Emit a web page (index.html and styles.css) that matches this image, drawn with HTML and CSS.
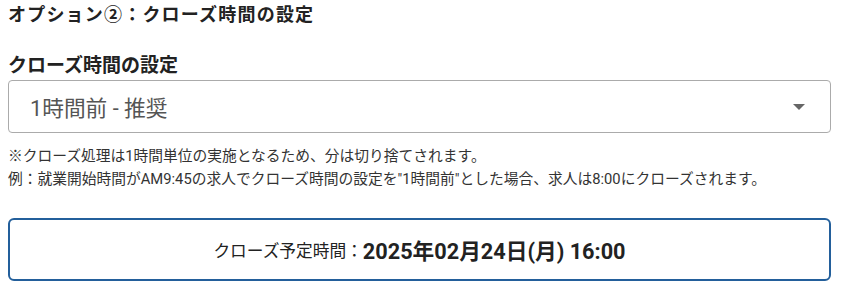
FILE: index.html
```html
<!DOCTYPE html>
<html lang="ja">
<head>
<meta charset="utf-8">
<link rel="stylesheet" href="styles.css">
</head>
<body>
<div class="page">
  <h2 class="title">オプション②：クローズ時間の設定</h2>
  <div class="field">
    <label class="label">クローズ時間の設定</label>
    <div class="select">
      <span class="select-value">1時間前 - 推奨</span>
      <svg class="caret" width="14" height="8" viewBox="0 0 14 8"><path d="M1 1 L13 1 L7 7 Z" fill="#666"/></svg>
    </div>
  </div>
  <div class="notes">
    <p>※クローズ処理は1時間単位の実施となるため、分は切り捨てされます。</p>
    <p>例：就業開始時間がAM9:45の求人でクローズ時間の設定を"1時間前"とした場合、求人は8:00にクローズされます。</p>
  </div>
  <div class="result">
    <span class="result-label">クローズ予定時間：</span><span class="result-value">2025年02月24日(月) 16:00</span>
  </div>
</div>
</body>
</html>
```

FILE: styles.css
```css
html, body {
  margin: 0;
  padding: 0;
  background: #fff;
}
body {
  font-family: Roboto, "Noto Sans CJK JP", sans-serif;
  color: #222;
}
.page {
  padding: 0 17px 0 8px;
}
.title {
  margin: 0;
  padding-top: 3px;
  font-size: 18px;
  line-height: 24px;
  font-weight: 700;
  letter-spacing: 1.2px;
  color: #222;
}
.field {
  margin-top: 25px;
}
.label {
  display: block;
  font-size: 19px;
  line-height: 27px;
  font-weight: 700;
  color: #222;
}
.select {
  margin-top: 1px;
  height: 51px;
  border: 1px solid #ababab;
  border-radius: 4px;
  display: flex;
  align-items: center;
  justify-content: space-between;
  padding: 0 24px 0 21px;
}
.select-value {
  font-size: 21.7px;
  color: #555;
}
.caret {
  display: block;
}
.notes {
  margin-top: 12px;
}
.notes p {
  margin: 0;
  font-size: 14.75px;
  line-height: 23px;
  color: #333;
}
.result {
  margin-top: 27px;
  height: 59px;
  border: 2px solid #235f9b;
  border-radius: 6px;
  display: flex;
  align-items: center;
  justify-content: center;
}
.result-label {
  font-size: 16.7px;
  color: #222;
}
.result-value {
  font-size: 21.7px;
  font-weight: 700;
  color: #222;
}
```
